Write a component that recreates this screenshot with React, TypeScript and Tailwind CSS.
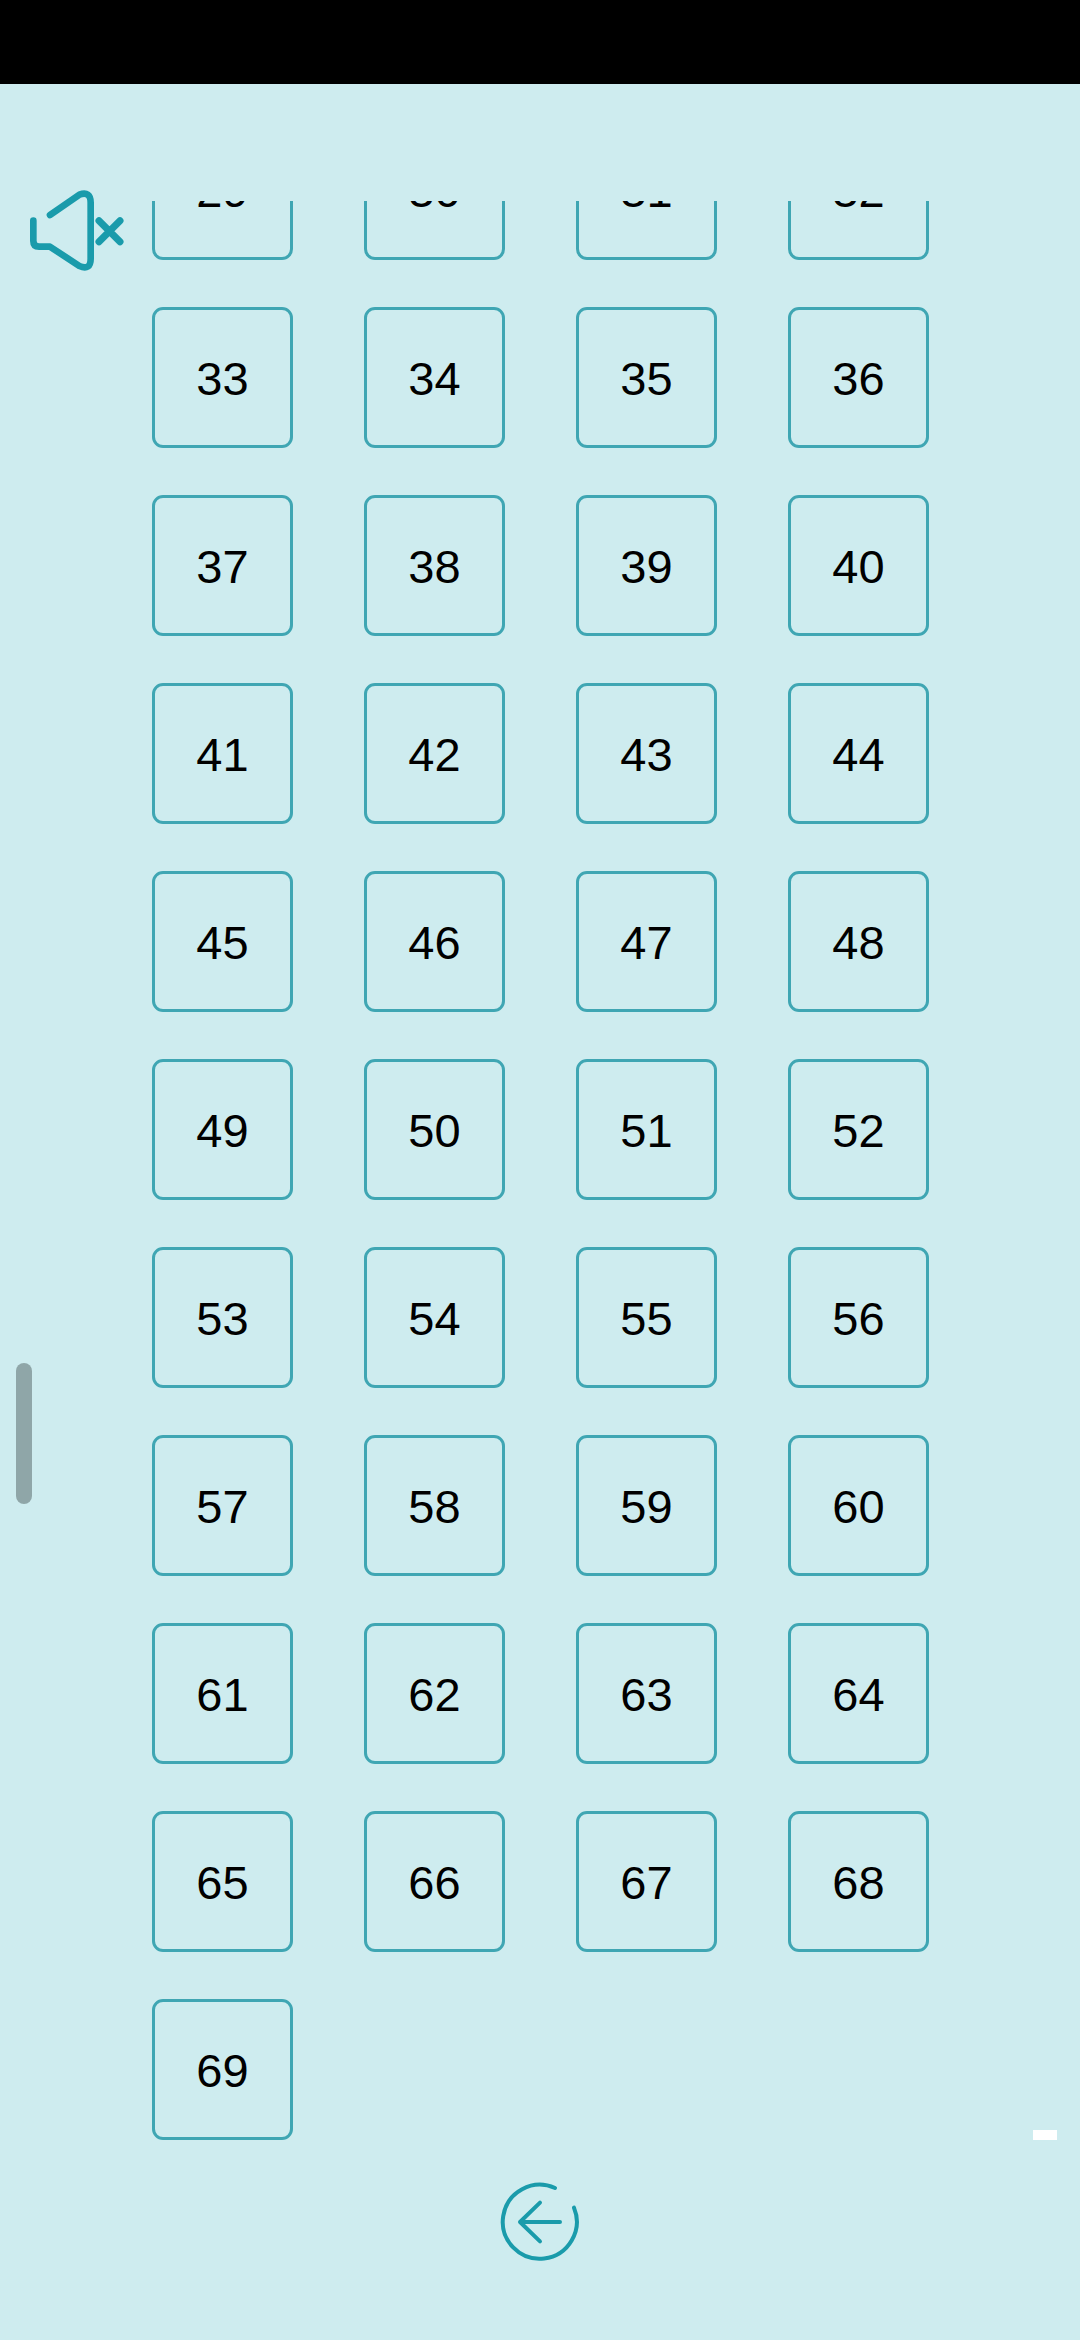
const numbers = Array.from({ length: 41 }, (_, i) => i + 29);

function MuteIcon() {
  return (
    <svg viewBox="60 369 330 282" className="w-[110px] h-[94px]" fill="none" stroke="#1a9bab" strokeLinecap="round" strokeLinejoin="round">
      <path
        d="M100 482V543Q100 560 117 560H150L238 618Q272 632 272 596V428Q272 392 238 404L150 465"
        strokeWidth="20"
      />
      <path d="M297 482L360 545M360 482L297 545" strokeWidth="21" />
    </svg>
  );
}

function BackIcon() {
  return (
    <svg viewBox="120 95 240 240" className="w-20 h-20" fill="none" stroke="#1a9bab" strokeLinecap="round" strokeLinejoin="round" strokeWidth="12">
      <path d="M342 172A111 111 0 1 1 285 113" />
      <path d="M300 215H180M240 157L180 215L240 273" />
    </svg>
  );
}

export default function App() {
  return (
    <div className="relative h-[2340px] w-[1080px] overflow-hidden bg-[#ceecef]" style={{ fontFamily: '"Liberation Sans", Arial, sans-serif' }}>
      {/* Status bar */}
      <div className="h-[84px] bg-black" />

      {/* Level grid */}
      <div className="mt-[117px] h-[1939px] overflow-hidden">
        <div className="-mt-[82px] pl-[152px] grid grid-cols-[repeat(4,141px)] gap-x-[71px] gap-y-[47px]">
          {numbers.map((n) => (
            <div
              key={n}
              className="h-[141px] flex items-center justify-center rounded-[11px] border-[3px] border-[#3fa6b3] pt-[3px] text-[47px] text-black"
            >
              {n}
            </div>
          ))}
        </div>
      </div>

      {/* Back button */}
      <div className="mt-[42px] flex justify-center">
        <BackIcon />
      </div>

      {/* Overlays */}
      <div className="absolute left-[20px] top-[183px]">
        <MuteIcon />
      </div>
      <div className="absolute left-[16px] top-[1363px] h-[141px] w-4 rounded-full bg-[#8fa6a8]" />
      <div className="absolute left-[1033px] top-[2130px] h-[10px] w-6 bg-white" />
    </div>
  );
}
